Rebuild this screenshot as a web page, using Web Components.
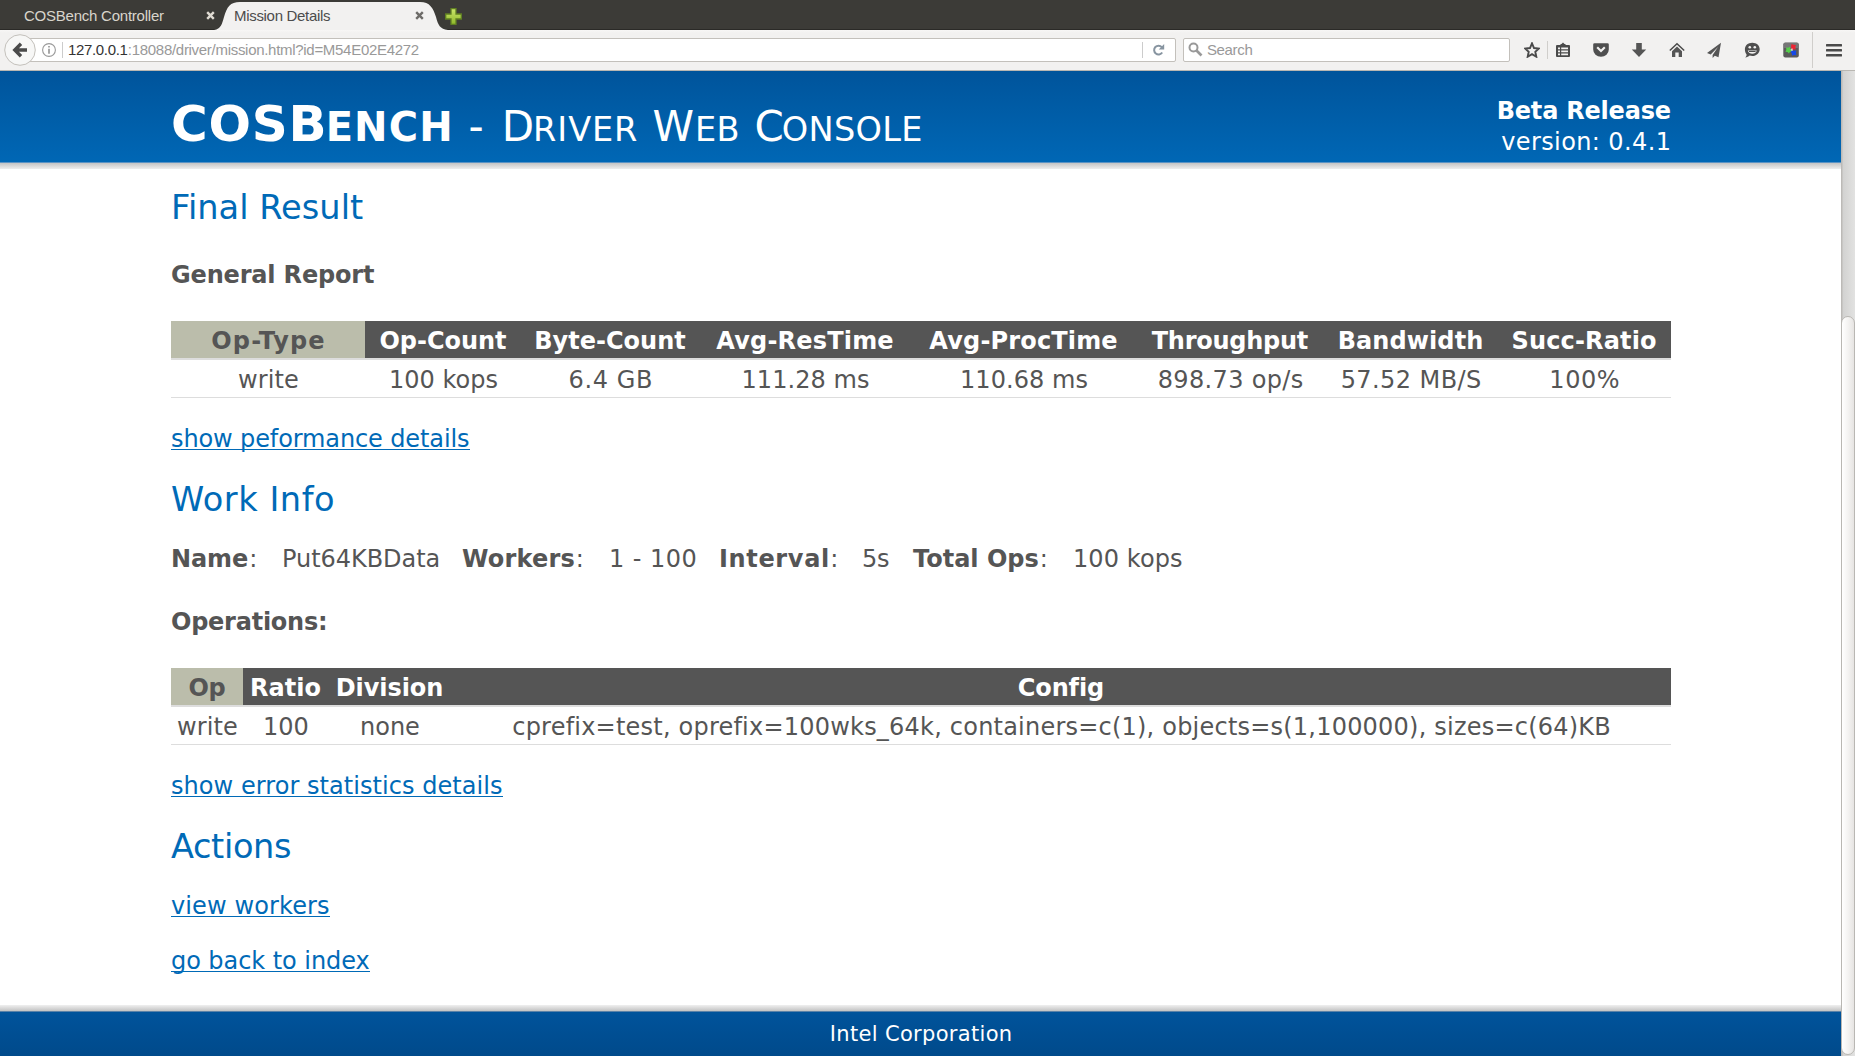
<!DOCTYPE html>
<html lang="en">
<head>
<meta charset="utf-8">
<title>Mission Details</title>
<style>
html,body{margin:0;height:100%;overflow:hidden;background:#fff}
body{font-family:Verdana,"DejaVu Sans",sans-serif}
</style>
</head>
<body>
<browser-window></browser-window>
<script>
const define = (name, html, setup) => customElements.define(name, class extends HTMLElement {
  connectedCallback() {
    if (this.shadowRoot) return;
    const root = this.attachShadow({mode: 'open'});
    root.innerHTML = typeof html === 'function' ? html(this) : html;
    if (setup) setup(this, root);
  }
});

/* Tracks its text so that the drawn glyphs span the width given in "w". */
const pen = document.createElement('canvas').getContext('2d');
define('fit-text', '<style>:host{display:inline-block;white-space:pre}</style><slot></slot>', host => {
  const cs = getComputedStyle(host), text = host.textContent;
  pen.font = `${cs.fontWeight} ${cs.fontSize} ${cs.fontFamily}`;
  const m = pen.measureText(text);
  const ink = m.actualBoundingBoxLeft + m.actualBoundingBoxRight;
  const gap = (Number(host.getAttribute('w')) - ink) / Math.max(1, text.length - 1);
  host.style.letterSpacing = gap.toFixed(3) + 'px';
  host.style.marginRight = (-gap).toFixed(3) + 'px';
});

define('tab-strip', `<style>
:host{display:flex;height:30px;background:linear-gradient(#3c3b37 29px,#2b2a27 29px);font:15px/20px "Liberation Sans",sans-serif;color:#d9d5cc}
.idle{width:190px;padding:6px 0 0 24px;display:flex;justify-content:space-between;box-sizing:content-box}
.idle svg{margin:5px -1px 0 0}
.active{width:234px;height:30px;display:grid;color:#4c4c4c}
.active>*{grid-area:1/1}
.label{display:flex;justify-content:space-between;padding:6px 24px 0 20px}
.label svg{margin-top:5px}
.plus{margin:8px 0 0 -3px;z-index:1}
</style>
<div class="idle"><fit-text w="140">COSBench Controller</fit-text><svg width="9" height="9"><path d="M1.200 1.200L7.800 7.800M7.800 1.200L1.200 7.800" stroke="#dfdbd2" stroke-width="2.400"/></svg></div>
<div class="active"><svg width="234" height="30"><path d="M0 30C7 29 8 24 10 17C13 7 16 2 26 2H206C216 2 219 8 222 17C224 25 226 29 234 30Z" fill="#f2f1f0"/></svg>
<div class="label"><fit-text w="95">Mission Details</fit-text><svg width="9" height="9"><path d="M1.200 1.200L7.800 7.800M7.800 1.200L1.200 7.800" stroke="#6d6b68" stroke-width="2.400"/></svg></div></div>
<svg class="plus" width="17" height="17"><defs><linearGradient id="g" x2="0" y2="1"><stop stop-color="#cbe56b"/><stop offset="1" stop-color="#8fb82a"/></linearGradient></defs><path d="M6 .7h5V6h5.300v5H11v5.300H6V11H.7V6H6Z" fill="url(#g)" stroke="#5f7f22" stroke-width="1.300"/></svg>`);

const icons = {
  star: '<path d="M8 1.300L10 6l4.900.5-3.600 3.300 1 4.900L8 12.200l-4.300 2.500 1-4.900L1.100 6.500 6 6Z" fill="none" stroke="#4a4a4a" stroke-width="1.900"/>',
  list: '<path d="M5.500 3V2h1L8 .5 9.500 2h1v1H14a1 1 0 0 1 1 1v10a1 1 0 0 1-1 1H2a1 1 0 0 1-1-1V4a1 1 0 0 1 1-1Z" fill="#4a4a4a"/><path d="M3 5.500h2v1.700H3zM6.200 5.500H13v1.700H6.200zM3 8.500h2v1.700H3zM6.200 8.500H13v1.700H6.200zM3 11.500h2v1.700H3zM6.200 11.500H13v1.700H6.200z" fill="#f2f1f0"/>',
  pocket: '<path d="M1.500 1.200h13q1.300 0 1.300 1.300V7.500a7.800 7.300 0 0 1-15.600 0V2.500Q.2 1.200 1.500 1.200Z" fill="#4f4f4f"/><path d="M4.200 5.300L8 9l3.800-3.700" fill="none" stroke="#f2f1f0" stroke-width="2.200"/>',
  down: '<path d="M5.200 1h5.600v6.500h4.400L8 15 .8 7.500h4.400Z" fill="#555"/>',
  home: '<path d="M.8 8.500L8 1.700l7.200 6.800" fill="none" stroke="#4a4a4a" stroke-width="1.500"/><path d="M8 4.500l5 4.700V15H9.700v-4.500H6.300V15H3V9.200Z" fill="#555"/>',
  plane: '<path d="M15 .8L1 11l3.700 1.400L12 5 6.600 13v3l2.200-2.300 3.700 1.500Z" fill="#555"/>',
  smile: '<path d="M8.300.7c4.300 0 7.400 2.800 7.400 6.500S12.600 14 8.300 14c-1 0-1.800-.1-2.600-.4C4.500 14.800 3 15.400 1.200 15.500c1.100-.9 1.500-1.900 1.300-3.200C1.400 11 .9 9.200.9 7.200.9 3.500 4 .7 8.300.7Z" fill="#4f4f4f"/><circle cx="5.800" cy="5.300" r="1.300" fill="#f2f1f0"/><circle cx="10.800" cy="5.300" r="1.300" fill="#f2f1f0"/><path d="M3.800 8.400h9c-.6 2.200-2.300 3.300-4.500 3.300s-3.900-1.100-4.500-3.300Z" fill="#f2f1f0"/><path d="M5 9.500h6.600" stroke="#4f4f4f"/>',
  color: '<rect x=".3" y=".5" width="15.500" height="15" rx="2" fill="#5b5b5b"/><rect x="1" y="1" width="14" height="5" fill="#777"/><path d="M8.500 2l2 .8 2.500.2-.8 2.200.8 2-2.500.4L9 8 8 5Z" fill="#ee2433"/><path d="M3 5.500l2.200.3L7 4.800l.4 2.500L9 9l-2.200 1-.8 1.600-1.500-1.500-2.100-.3 1-2Z" fill="#55cf4b"/><path d="M9 8.500l2 .2 2.300-.2-.4 2.400.5 2.300-2.400-.3-1.900.8-.3-2.300L7.700 9.700Z" fill="#1648e8"/><path d="M7.500 7l2-.8.400 2.200-1.200.8Z" fill="#fff" opacity=".7"/>',
  menu: '<path d="M1 3.200h14M1 8.200h14M1 13.200h14" stroke="#4a4a4a" stroke-width="2.600" stroke-linecap="round"/>'
};
define('tool-icon', host => `<style>:host{display:block;width:16px;height:16px}svg{display:block}</style><svg width="16" height="16" viewBox="0 0 16 16">${icons[host.getAttribute('name')]}</svg>`);

define('nav-bar', `<style>
:host{display:flex;align-items:center;height:41px;box-sizing:border-box;padding:0 13px 1px 4px;background:linear-gradient(#f7f6f5,#f2f1f0 3px);border-bottom:1px solid #b9b7b2;font:15px/20px "Liberation Sans",sans-serif;color:#999}
.back{flex:none;z-index:1;display:block;margin-right:-16px}
.field{box-sizing:border-box;height:24px;border:1px solid #c3c0bb;background:#fff;display:flex;align-items:center}
.url{width:1160px;border-radius:0 2px 2px 0;padding-left:24px;margin-left:-1px}
.url b{font-weight:400;color:#333}
.url .sep{height:16px;width:1px;background:#ccc}
.url fit-text{margin-left:5px}
.search{width:328px;margin-left:7px;border-radius:2px;padding-left:4px}
.search fit-text{margin-left:4px}
.rule{width:1px;height:18px;background:#d0cecb}
</style>
<svg class="back" width="32" height="32"><circle cx="16" cy="16" r="15.300" fill="#f7f7f6" stroke="#c3c0bb"/><path d="M23 16H12M17 9.800L10.800 16l6.200 6.200" fill="none" stroke="#4a4a4a" stroke-width="3.400"/></svg>
<div class="field url">
<svg width="22" height="16" style="margin-left:-4px"><circle cx="9" cy="8" r="6.400" fill="none" stroke="#999" stroke-width="1.100"/><path d="M9 6.700v5M9 3.900v1.600" stroke="#999" stroke-width="1.700"/></svg>
<i class="sep"></i><b><fit-text w="58.500">127.0.0.1</fit-text></b><fit-text w="290" style="margin-left:0">:18088/driver/mission.html?id=M54E02E4272</fit-text>
<i class="sep" style="margin-left:auto"></i>
<svg width="32" height="16"><path d="M18.800 5.100A4.400 4.400 0 1 0 19.200 10.500" fill="none" stroke="#8794a0" stroke-width="2"/><path d="M21.200 2v5.500h-5.500Z" fill="#8794a0"/></svg>
</div>
<div class="field search"><svg width="15" height="15"><circle cx="5.500" cy="5.500" r="4" fill="none" stroke="#999" stroke-width="2"/><path d="M8.500 8.500L13.500 13.500" stroke="#999" stroke-width="2.600"/></svg><fit-text w="45.500">Search</fit-text></div>
<tool-icon name="star" style="margin-left:14px"></tool-icon>
<i class="rule" style="margin:0 7px"></i>
<tool-icon name="list"></tool-icon>
<tool-icon name="pocket" style="margin-left:22px"></tool-icon>
<tool-icon name="down" style="margin-left:22px"></tool-icon>
<tool-icon name="home" style="margin-left:22px"></tool-icon>
<tool-icon name="plane" style="margin-left:21px"></tool-icon>
<tool-icon name="smile" style="margin-left:22px"></tool-icon>
<tool-icon name="color" style="margin-left:23px"></tool-icon>
<i class="rule" style="height:36px;margin-left:13px"></i>
<tool-icon name="menu" style="margin-left:13px"></tool-icon>`);

define('console-header', `<style>
:host{display:block;height:98px}
.band{height:91px;border-bottom:1px solid #5b93c4;background:linear-gradient(#00549b,#0067b5);color:#fff;display:flex;justify-content:space-between;padding:0 170px 0 171px}
.shade{height:6px;background:linear-gradient(#c4c4c4,#eee)}
h1{margin:13px 0 0;font-size:42px;line-height:78px;height:78px;line-height:80px;font-weight:400;display:flex;align-items:baseline;text-transform:uppercase}
h1 b{font-size:50px}
small{font-size:.8em}
.rel{text-align:right;font-size:24px;line-height:31px;margin-top:25px;display:flex;flex-direction:column;align-items:flex-end}
</style>
<div class="band"><h1><b><fit-text w="150.500">COSB</fit-text><small><fit-text w="120.500" style="margin-left:-1px">ENCH</fit-text></small></b>
<fit-text w="14" style="margin-left:16px">-</fit-text>
<span style="margin-left:18px"><fit-text w="26.500">D</fit-text><small><fit-text w="101" style="margin-left:-1px">RIVER</fit-text></small></span>
<span style="margin-left:15px"><fit-text w="37">W</fit-text><small><fit-text w="39.500" style="margin-left:1px">EB</fit-text></small></span>
<span style="margin-left:15px"><fit-text w="26.500">C</fit-text><small><fit-text w="138.500" style="margin-left:-2px">ONSOLE</fit-text></small></span></h1>
<div class="rel"><b><fit-text w="172">Beta Release</fit-text></b><fit-text w="168.500">version: 0.4.1</fit-text></div></div>
<div class="shade"></div>`);

define('section-title', `<style>:host{display:block;height:39px;padding-top:1px;font-size:33.600px;line-height:40px;color:#006ab7;margin-top:25px}</style><slot></slot>`);
define('sub-title', `<style>:host{display:block;height:30px;font-size:24px;line-height:30px;font-weight:700;margin-top:33px}</style><slot></slot>`);
define('text-link', host => `<style>:host{display:block;height:30px;font-size:24px;line-height:30px;color:#006ab7}a{color:inherit;display:block;text-decoration:none;box-sizing:border-box;border-bottom:1px solid #006ab7;width:${host.getAttribute('span')}px;height:26px;white-space:nowrap}</style><a href="#"><slot></slot></a>`);

/* Column widths come from "cols"; each cell is "text|width", cells separated by ";". */
define('data-table', host => {
  const cells = name => host.getAttribute(name).split(';').map(c => {
    const [t, w] = c.split('|');
    return `<div><fit-text w="${w}">${t}</fit-text></div>`;
  }).join('');
  const cols = host.getAttribute('cols');
  return `<style>
:host{display:block;margin-top:31px;font-size:24px;text-align:center}
.row{display:grid;grid-template-columns:${cols};height:37px;line-height:41px;border-bottom:1px solid #ddd}
.row>div{padding-left:1px;height:37px;white-space:nowrap}
.head{background:#555;color:#fff;font-weight:700;border-bottom:2px solid #ddd}
.head>div{padding-left:0}
.head>div:first-child{background:#bbbdab;color:#555}
</style><div class="row head">${cells('head')}</div><div class="row">${cells('body')}</div>`;
});

define('work-facts', `<style>:host{display:grid;grid-template-columns:111px 180px 147px 110px 143px 51px 160px auto;height:30px;line-height:30px;font-size:24px;margin-top:25px}span{white-space:nowrap}b+fit-text{margin-left:1px}</style>
<span><b><fit-text w="75">Name</fit-text></b><fit-text w="3">:</fit-text></span><fit-text w="154.500">Put64KBData</fit-text>
<span><b><fit-text w="112.500">Workers</fit-text></b><fit-text w="3">:</fit-text></span><fit-text w="84.500">1 - 100</fit-text>
<span><b><fit-text w="107">Interval</fit-text></b><fit-text w="3">:</fit-text></span><fit-text w="26">5s</fit-text>
<span><b><fit-text w="125.500">Total Ops</fit-text></b><fit-text w="3">:</fit-text></span><fit-text w="107">100 kops</fit-text>`);

define('console-footer', `<style>:host{display:block}.shade{height:6px;background:linear-gradient(#f0f0f0,#c2c2c2)}
.bar{border-top:1px solid #5a82a8;height:44px;background:linear-gradient(#00539b,#004a8b);color:#fff;font-size:21px;line-height:45px;text-align:center;padding-left:1px}</style><div class="shade"></div><div class="bar"><slot></slot></div>`);

define('scroll-bar', `<style>:host{display:block;width:14px;box-sizing:border-box;padding-top:245px;background:linear-gradient(90deg,#bcbab7 1px,#d2d2d1 2px,#e2e2e1)}
i{display:block;height:739px;box-sizing:border-box;border:1px solid #b9b7b3;border-radius:7px;background:linear-gradient(90deg,#fff,#f4f3f2 50%,#e6e4e2)}</style><i></i>`);

define('mission-page', `<style>
:host{display:flex;flex-direction:column;color:#555;background:#fff}
main{flex:1;width:1500px;padding:0 0 0 171px}
</style>
<console-header></console-header>
<main>
<section-title style="margin-top:18px"><fit-text w="189">Final Result</fit-text></section-title>
<sub-title><fit-text w="202">General Report</fit-text></sub-title>
<data-table cols="194px 156px 178px 212px 225px 188px 173px 174px"
 head="Op-Type|112;Op-Count|125.500;Byte-Count|149;Avg-ResTime|177;Avg-ProcTime|188;Throughput|156;Bandwidth|142.500;Succ-Ratio|143.500"
 body="write|59;100 kops|106.500;6.4 GB|81.500;111.28 ms|125.500;110.68 ms|125.500;898.73 op/s|144;57.52 MB/S|138.500;100%|67.500"></data-table>
<text-link span="299" style="margin-top:26px"><fit-text w="297">show peformance details</fit-text></text-link>
<section-title><fit-text w="161">Work Info</fit-text></section-title>
<work-facts></work-facts>
<sub-title><fit-text w="153">Operations:</fit-text></sub-title>
<data-table cols="72px 85px 123px 1220px"
 head="Op|36;Ratio|68.500;Division|104.500;Config|83.500"
 body="write|59;100|42.500;none|57;cprefix=test, oprefix=100wks_64k, containers=c(1), objects=s(1,100000), sizes=c(64)KB|1096"></data-table>
<text-link span="332" style="margin-top:26px"><fit-text w="330">show error statistics details</fit-text></text-link>
<section-title><fit-text w="119">Actions</fit-text></section-title>
<text-link span="159" style="margin-top:25px"><fit-text w="158">view workers</fit-text></text-link>
<text-link span="199" style="margin-top:25px"><fit-text w="197.500">go back to index</fit-text></text-link>
</main>
<console-footer><fit-text w="179">Intel Corporation</fit-text></console-footer>`);

define('browser-window', `<style>
:host{display:flex;flex-direction:column;width:1855px;height:1056px;overflow:hidden}
.view{display:flex;flex:1;min-height:0}mission-page{flex:1}
</style><tab-strip></tab-strip><nav-bar></nav-bar><div class="view"><mission-page></mission-page><scroll-bar></scroll-bar></div>`);
</script>
</body>
</html>
